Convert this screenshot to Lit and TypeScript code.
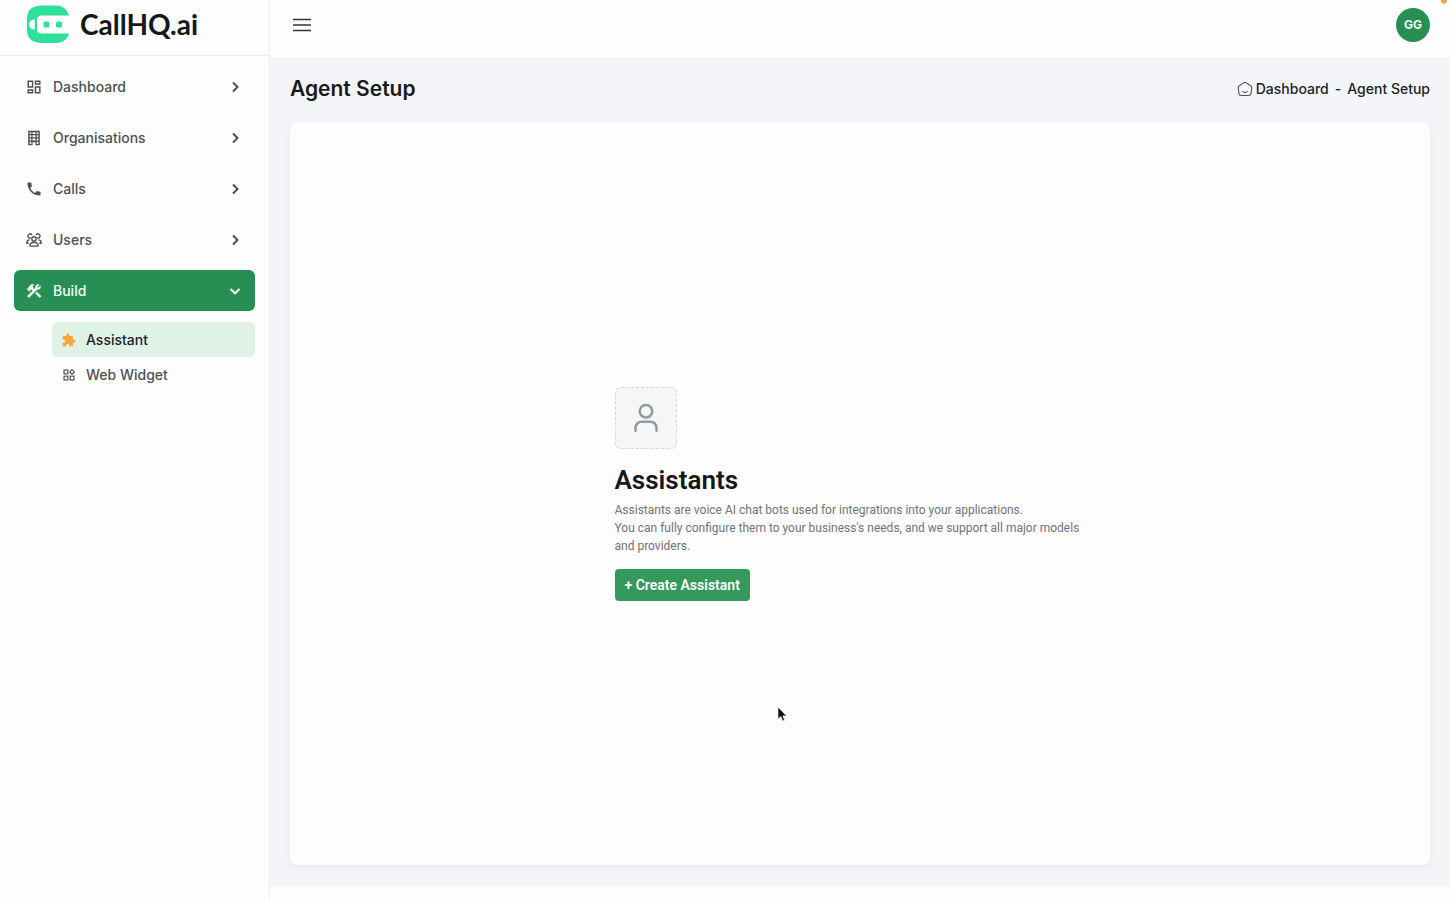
import { LitElement, html, css, svg } from "lit";
import { customElement } from "lit/decorators.js";
import { classMap } from "lit/directives/class-map.js";

const icons = {
  dashboard: svg`<path fill="currentColor" d="M19,5V7H15V5H19M9,5V11H5V5H9M19,13V19H15V13H19M9,17V19H5V17H9M21,3H13V9H21V3M11,3H3V13H11V3M21,11H13V21H21V11M11,15H3V21H11V15Z"/>`,
  building: svg`<path fill="currentColor" fill-rule="evenodd" d="M4 2H20V22H14V18H10V22H4ZM6 4V6.500H8.300V4ZM10 4V6.500H14V4ZM15.700 4V6.500H18V4ZM6 8.200V11H8.300V8.200ZM10 8.200V11H14V8.200ZM15.700 8.200V11H18V8.200ZM6 12.700V15.500H8.300V12.700ZM10 12.700V15.500H14V12.700ZM15.700 12.700V15.500H18V12.700ZM6 17.300V20.300H8.300V17.300ZM15.700 17.300V20.300H18V17.300Z"/>`,
  phone: svg`<path fill="currentColor" d="M6.620 10.790c1.440 2.830 3.760 5.140 6.590 6.590l2.200-2.200c.27-.27.67-.36 1.020-.24 1.120.37 2.330.57 3.570.57.55 0 1 .45 1 1V20c0 .55-.45 1-1 1-9.390 0-17-7.610-17-17 0-.55.45-1 1-1h3.500c.55 0 1 .45 1 1 0 1.250.2 2.450.57 3.570.11.35.03.74-.25 1.020l-2.200 2.200z"/>`,
  users: svg`<g fill="none" stroke="currentColor" stroke-width="1.900" stroke-linecap="round" stroke-linejoin="round"><circle cx="12" cy="10.500" r="3"/><path d="M6.500 20.500c-.4-3.500 2-5.200 5.500-5.200s5.900 1.700 5.500 5.200z"/><path d="M7.300 9.300A2.900 2.900 0 1 1 8.700 4.500M16.700 9.300A2.900 2.900 0 1 0 15.300 4.500"/><path d="M5 11.800c-2 .5-3 2-2.900 4.700H4M19 11.800c2 .5 3 2 2.900 4.700H20"/></g>`,
  tools: svg`<path fill="currentColor" stroke="currentColor" stroke-width=".5" d="M13.783 15.172l2.121-2.121 5.996 5.996-2.121 2.121zM17.500 10c1.930 0 3.500-1.570 3.500-3.500 0-.58-.16-1.120-.41-1.600l-2.700 2.700-1.490-1.490 2.700-2.700c-.48-.25-1.020-.41-1.600-.41C15.570 3 14 4.570 14 6.500c0 .41.08.8.21 1.160l-1.850 1.850-1.780-1.780.71-.71-1.410-1.410L12 3.490c-1.170-1.170-3.070-1.170-4.240 0L4.220 7.030l1.410 1.410H2.810l-.71.71 3.540 3.540.71-.71V9.150l1.410 1.410.71-.71 1.780 1.780-7.410 7.410 2.120 2.120L16.340 9.790c.36.13.75.21 1.160.21z"/>`,
  puzzle: svg`<path fill="#f9a83f" d="M20.500 11H19V7c0-1.100-.9-2-2-2h-4V3.500C13 2.120 11.880 1 10.500 1S8 2.120 8 3.500V5H4c-1.100 0-1.990.9-1.990 2v3.800H3.500c1.490 0 2.700 1.210 2.700 2.700s-1.210 2.700-2.700 2.700H2V20c0 1.100.9 2 2 2h3.800v-1.500c0-1.490 1.210-2.700 2.700-2.700 1.490 0 2.700 1.210 2.700 2.700V22H17c1.100 0 2-.9 2-2v-4h1.500c1.380 0 2.500-1.120 2.500-2.500S21.880 11 20.500 11z"/>`,
  widget: svg`<g fill="none" stroke="currentColor" stroke-width="2"><rect x="3.500" y="3.500" width="6.500" height="6.500"/><rect x="3.500" y="14" width="6.500" height="6.500"/><rect x="14" y="14" width="6.500" height="6.500"/><path d="M17.200 2.700l4 4-4 4-4-4z"/></g>`,
};

const chevron = (open: boolean) => html`<svg class="chevron" viewBox="0 0 16 16" aria-hidden="true">
  <path d=${open ? "M3.500 6L8 10.300L12.500 6" : "M6 3.500L10.500 8L6 12.500"} fill="none" stroke="currentColor" stroke-width="2"/>
</svg>`;

const menu = [
  { label: "Dashboard", icon: icons.dashboard, open: false },
  { label: "Organisations", icon: icons.building, open: false },
  { label: "Calls", icon: icons.phone, open: false },
  { label: "Users", icon: icons.users, open: false },
  { label: "Build", icon: icons.tools, open: true },
];

@customElement("app-sidebar")
class AppSidebar extends LitElement {
  static styles = css`
    :host { display: flex; flex-direction: column; width: 270px; flex: none; box-sizing: border-box; background: #fdfdfd; border-right: 1px solid #eff0f2; font-family: Inter, sans-serif; }
    .brand { display: flex; align-items: center; gap: 10px; height: 56px; box-sizing: border-box; padding: 0 26px 8px; border-bottom: 1px solid #eaebed; color: #151719; text-decoration: none; font: 700 28px/36px Lato, sans-serif; }
    .logo { width: 44px; height: 38px; flex: none; }
    nav { display: flex; flex-direction: column; gap: 10px; padding: 10px 14px; }
    button, .sub { font-family: inherit; font-size: 14px; font-weight: 500; color: #4d5154; border: 0; text-align: left; }
    button { display: flex; align-items: center; height: 41px; padding: 0 12px; border-radius: 6px; background: none; gap: 11px; cursor: pointer; }
    .icon { width: 16px; height: 16px; flex: none; }
    .label { flex: 1; }
    .chevron { width: 16px; height: 16px; flex: none; }
    .open { background: #278f54; color: #f4fbf6; }
    .subs { display: flex; flex-direction: column; padding: 1px 0 0 38px; }
    .sub { display: flex; align-items: center; gap: 10px; height: 35px; padding: 0 10px; border-radius: 5px; text-decoration: none; }
    .sub .icon { width: 14px; height: 14px; }
    .current { background: #e0f1e6; color: #202427; }
  `;
  render() {
    return html`
      <a class="brand" href="#">
        <svg class="logo" viewBox="0 0 44 38" aria-hidden="true">
          <path fill="#2fe09b" d="M14.500 .5H30C37 .5 41.500 5 43 10.500H15.500Q11 10.500 11 15V24.500Q11 28.500 15.500 28.500H43C41.500 34 37 38 30 38H14.500Q1 37 1 25V13Q1 1.500 14.500 .5Z"/>
          <path fill="#fdfdfd" d="M8.800 14.500v10c-3.600 0-5.500-2-5.500-5s1.900-5 5.500-5z"/>
          <rect fill="#2fe09b" x="17.500" y="16.500" width="6" height="6" rx="1.500"/>
          <rect fill="#2fe09b" x="30" y="16.500" width="6" height="6" rx="1.500"/>
        </svg>
        <span>CallHQ.ai</span>
      </a>
      <nav aria-label="Main">
        ${menu.map((m) => html`<button class=${classMap({ open: m.open })} aria-expanded=${m.open ? "true" : "false"}>
          <svg class="icon" viewBox="1 1 22 22" aria-hidden="true">${m.icon}</svg>
          <span class="label">${m.label}</span>${chevron(m.open)}
        </button>`)}
        <div class="subs">
          <a class="sub current" href="#assistant" aria-current="page"><svg class="icon" viewBox="1 0 23 23" aria-hidden="true">${icons.puzzle}</svg>Assistant</a>
          <a class="sub" href="#widget"><svg class="icon" viewBox="0 0 24 24" aria-hidden="true">${icons.widget}</svg>Web Widget</a>
        </div>
      </nav>`;
  }
}

@customElement("empty-state")
class EmptyState extends LitElement {
  static styles = css`
    :host { display: flex; flex-direction: column; align-items: flex-start; width: 100%; max-width: 491px; font-family: Roboto, sans-serif; }
    .tile { display: grid; place-items: center; width: 62px; height: 62px; box-sizing: border-box; border: 1px dashed #d4d7dc; border-radius: 6px; background: #f5f6f8; }
    .tile svg { width: 36px; height: 36px; }
    h2 { margin: 14px 0 4px; font-size: 26px; line-height: 34px; font-weight: 600; color: #151719; }
    p { margin: 0 0 14px; padding-right: 10px; font-size: 12px; line-height: 18px; color: #707478; }
    button { height: 32px; padding: 0 10px; border: 0; border-radius: 4px; background: #35985d; color: #fcfefc; font: 600 14px/20px Roboto, sans-serif; cursor: pointer; }
  `;
  render() {
    return html`
      <div class="tile"><svg viewBox="0 0 24 24" fill="none" stroke="#96999c" stroke-width="1.700" stroke-linecap="round" aria-hidden="true"><circle cx="12" cy="7.500" r="4.200"/><path d="M5 20.500v-2a4 4 0 0 1 4-4h6a4 4 0 0 1 4 4v2"/></svg></div>
      <h2>Assistants</h2>
      <p>Assistants are voice AI chat bots used for integrations into your applications.<br>You can fully configure them to your business's needs, and we support all major models and providers.</p>
      <button>+ Create Assistant</button>`;
  }
}

@customElement("app-root")
class AppRoot extends LitElement {
  static styles = css`
    :host { display: flex; min-height: 100vh; position: relative; background: #fdfdfd; font-family: Inter, sans-serif; overflow: hidden; }
    .page { display: flex; flex-direction: column; flex: 1; min-width: 0; }
    header { display: flex; align-items: center; justify-content: space-between; height: 57px; box-sizing: border-box; padding: 0 20px 7px 22px; }
    .menu { display: grid; padding: 0; border: 0; background: none; cursor: pointer; }
    .menu svg { width: 20px; height: 20px; }
    .avatar { width: 34px; height: 34px; padding: 0; border: 0; border-radius: 50%; background: #278f54; color: #f4fbf6; font: 700 12px/34px Inter, sans-serif; cursor: pointer; }
    main { display: flex; flex-direction: column; flex: 1; padding: 0 20px; background: #f4f5f8; }
    .title { display: flex; align-items: center; justify-content: space-between; height: 65px; box-sizing: border-box; padding-bottom: 1px; }
    h1 { margin: 0; font-size: 21px; line-height: 28px; font-weight: 600; color: #181a1d; }
    .crumbs { display: flex; align-items: center; gap: 6px; font-size: 14px; font-weight: 500; line-height: 20px; color: #202326; }
    .crumbs a { display: flex; align-items: center; gap: 3px; color: inherit; text-decoration: none; }
    .crumbs svg { width: 16px; height: 16px; }
    .card { display: flex; flex: 1; align-items: center; justify-content: center; margin-bottom: 21px; border-radius: 8px; background: #fdfdfd; box-shadow: 0 3px 8px rgba(60, 70, 80, 0.06); }
    footer { height: 14px; }
    .cursor { position: absolute; left: 777px; top: 706px; width: 10px; height: 16px; }
    .mark { position: absolute; right: 2px; top: 0; width: 8px; height: 4px; }
  `;
  render() {
    return html`
      <app-sidebar></app-sidebar>
      <div class="page">
        <header>
          <button class="menu" aria-label="Toggle menu"><svg viewBox="0 0 20 20" stroke="#33373a" stroke-width="1.600" aria-hidden="true"><path d="M1 4.500H19M1 10H19M1 15.500H19"/></svg></button>
          <button class="avatar" aria-label="Account GG">GG</button>
        </header>
        <main>
          <div class="title">
            <h1>Agent Setup</h1>
            <nav class="crumbs" aria-label="Breadcrumb">
              <a href="#dashboard"><svg viewBox="0 0 16 16" fill="none" stroke="#4e5256" stroke-width="1.100" stroke-linecap="round" stroke-linejoin="round" aria-hidden="true"><path d="M6.600 1.900Q8 .9 9.400 1.900L13.700 4.800Q15 5.700 14.800 7.200L14 12.600Q13.700 14.500 11.800 14.500H4.200Q2.300 14.500 2 12.600L1.200 7.200Q1 5.700 2.300 4.800Z"/><path d="M5.800 10.600Q8 12.300 10.200 10.600"/></svg>Dashboard</a>
              <span>-</span>
              <span>Agent Setup</span>
            </nav>
          </div>
          <section class="card"><empty-state></empty-state></section>
        </main>
        <footer></footer>
      </div>
      <svg class="mark" viewBox="0 0 8 4" aria-hidden="true"><path fill="#f2a13e" d="M1 0H7V2L4 4L1 2Z"/></svg>
      <svg class="cursor" viewBox="0 0 10 16" aria-hidden="true"><path fill="#111" stroke="#fff" stroke-width=".6" d="M1 1V13L3.800 10.500L5.800 15L7.600 14.200L5.800 9.900H9.500Z"/></svg>`;
  }
}
